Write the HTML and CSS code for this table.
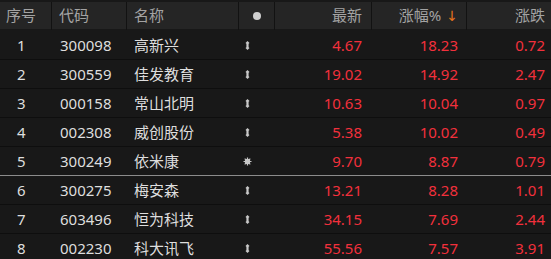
FILE: index.html
```html
<!DOCTYPE html>
<html lang="zh">
<head>
<meta charset="utf-8">
<link rel="stylesheet" href="styles.css">
</head>
<body>
<div class="table">
  <div class="row head">
    <div class="c c-idx">序号</div>
    <div class="c c-code">代码</div>
    <div class="c c-name">名称</div>
    <div class="c c-mark"><span class="dot"></span></div>
    <div class="c c-num">最新</div>
    <div class="c c-num c-pct">涨幅%<span class="arrow">↓</span></div>
    <div class="c c-num c-last">涨跌</div>
  </div>

  <div class="row">
    <div class="c c-idx">1</div><div class="c c-code">300098</div><div class="c c-name">高新兴</div>
    <div class="c c-mark"><svg class="updown" width="5" height="9" viewBox="0 0 5 9"><polygon points="2.5,0 4.5,2 3.6,2.8 3.6,6.2 4.5,7 2.5,9 0.5,7 1.4,6.2 1.4,2.8 0.5,2"/></svg></div>
    <div class="c c-num red">4.67</div><div class="c c-num c-pct red">18.23</div><div class="c c-num c-last red">0.72</div>
  </div>
  <div class="row">
    <div class="c c-idx">2</div><div class="c c-code">300559</div><div class="c c-name">佳发教育</div>
    <div class="c c-mark"><svg class="updown" width="5" height="9" viewBox="0 0 5 9"><polygon points="2.5,0 4.5,2 3.6,2.8 3.6,6.2 4.5,7 2.5,9 0.5,7 1.4,6.2 1.4,2.8 0.5,2"/></svg></div>
    <div class="c c-num red">19.02</div><div class="c c-num c-pct red">14.92</div><div class="c c-num c-last red">2.47</div>
  </div>
  <div class="row">
    <div class="c c-idx">3</div><div class="c c-code">000158</div><div class="c c-name">常山北明</div>
    <div class="c c-mark"><svg class="updown" width="5" height="9" viewBox="0 0 5 9"><polygon points="2.5,0 4.5,2 3.6,2.8 3.6,6.2 4.5,7 2.5,9 0.5,7 1.4,6.2 1.4,2.8 0.5,2"/></svg></div>
    <div class="c c-num red">10.63</div><div class="c c-num c-pct red">10.04</div><div class="c c-num c-last red">0.97</div>
  </div>
  <div class="row">
    <div class="c c-idx">4</div><div class="c c-code">002308</div><div class="c c-name">威创股份</div>
    <div class="c c-mark"><svg class="updown" width="5" height="9" viewBox="0 0 5 9"><polygon points="2.5,0 4.5,2 3.6,2.8 3.6,6.2 4.5,7 2.5,9 0.5,7 1.4,6.2 1.4,2.8 0.5,2"/></svg></div>
    <div class="c c-num red">5.38</div><div class="c c-num c-pct red">10.02</div><div class="c c-num c-last red">0.49</div>
  </div>
  <div class="row split">
    <div class="c c-idx">5</div><div class="c c-code">300249</div><div class="c c-name">依米康</div>
    <div class="c c-mark"><svg class="star" width="9" height="9" viewBox="0 0 9 9"><circle cx="4.5" cy="4.5" r="2.2"/><path d="M4.5 0.5V8.5M0.5 4.5H8.5M1.7 1.7L7.3 7.3M7.3 1.7L1.7 7.3"/></svg></div>
    <div class="c c-num red">9.70</div><div class="c c-num c-pct red">8.87</div><div class="c c-num c-last red">0.79</div>
  </div>
  <div class="row">
    <div class="c c-idx">6</div><div class="c c-code">300275</div><div class="c c-name">梅安森</div>
    <div class="c c-mark"><svg class="updown" width="5" height="9" viewBox="0 0 5 9"><polygon points="2.5,0 4.5,2 3.6,2.8 3.6,6.2 4.5,7 2.5,9 0.5,7 1.4,6.2 1.4,2.8 0.5,2"/></svg></div>
    <div class="c c-num red">13.21</div><div class="c c-num c-pct red">8.28</div><div class="c c-num c-last red">1.01</div>
  </div>
  <div class="row">
    <div class="c c-idx">7</div><div class="c c-code">603496</div><div class="c c-name">恒为科技</div>
    <div class="c c-mark"><svg class="updown" width="5" height="9" viewBox="0 0 5 9"><polygon points="2.5,0 4.5,2 3.6,2.8 3.6,6.2 4.5,7 2.5,9 0.5,7 1.4,6.2 1.4,2.8 0.5,2"/></svg></div>
    <div class="c c-num red">34.15</div><div class="c c-num c-pct red">7.69</div><div class="c c-num c-last red">2.44</div>
  </div>
  <div class="row">
    <div class="c c-idx">8</div><div class="c c-code">002230</div><div class="c c-name">科大讯飞</div>
    <div class="c c-mark"><svg class="updown" width="5" height="9" viewBox="0 0 5 9"><polygon points="2.5,0 4.5,2 3.6,2.8 3.6,6.2 4.5,7 2.5,9 0.5,7 1.4,6.2 1.4,2.8 0.5,2"/></svg></div>
    <div class="c c-num red">55.56</div><div class="c c-num c-pct red">7.57</div><div class="c c-num c-last red">3.91</div>
  </div>
</div>
</body>
</html>
```

FILE: styles.css
```css
html, body {
  margin: 0;
  padding: 0;
  background: #181818;
  overflow: hidden;
}
body {
  font-family: "Noto Sans", "Noto Sans CJK SC", sans-serif;
  font-size: 15px;
  color: #dedede;
}
.table {
  width: 551px;
}
.row {
  display: grid;
  grid-template-columns: 51px 75px 112px 36px 97px 95px 85px;
  height: 28px;
  border-bottom: 1px solid #0e0e0e;
  align-items: center;
}
.row.head {
  height: 27px;
  margin: 2px 0 2px;
  border-bottom: none;
  background: #252525;
  color: #a3a3a3;
  align-items: stretch;
}
.row.split {
  border-bottom-color: #8c8c8c;
}
.c {
  white-space: nowrap;
  line-height: 28px;
}
.head .c {
  line-height: 27px;
  border-left: 1px solid #121212;
}
.head .c:first-child {
  border-left: none;
}
.c-idx {
  padding-left: 17px;
}
.head .c-idx {
  padding-left: 6px;
}
.c-code {
  padding-left: 9px;
}
.head .c-code {
  padding-left: 7px;
}
.c-name {
  padding-left: 8px;
}
.head .c-name {
  padding-left: 7px;
}
.c-mark {
  display: flex;
  align-items: center;
  padding-left: 7px;
}
.head .c-mark {
  justify-content: center;
  padding-left: 0;
}
.dot {
  width: 8px;
  height: 8px;
  border-radius: 50%;
  background: #cfcfcf;
}
.updown {
  fill: #c8c8c8;
  display: block;
}
.star {
  display: block;
  margin-left: -2px;
  fill: #c8c8c8;
  stroke: #c8c8c8;
  stroke-width: 1.2;
}
.c-num {
  text-align: right;
  padding-right: 9px;
}
.c-pct {
  padding-right: 8px;
}
.c-last {
  padding-right: 6px;
}
.arrow {
  color: #e8721c;
  margin-left: 5px;
  font-family: "DejaVu Sans", sans-serif;
  font-size: 14px;
}
.red {
  color: #f2303c;
}
```
